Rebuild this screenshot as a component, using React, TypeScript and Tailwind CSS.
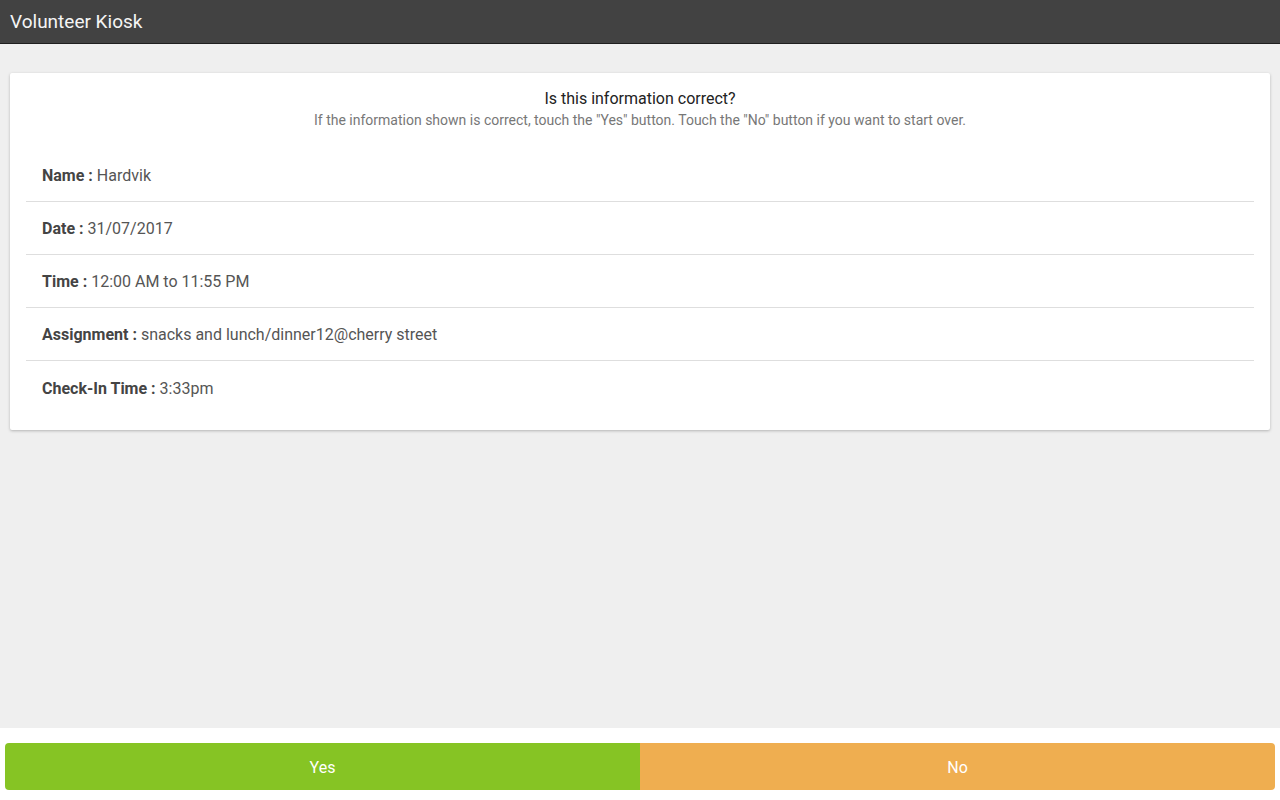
import React from "react";

const rows = [
  { label: "Name", value: "Hardvik" },
  { label: "Date", value: "31/07/2017" },
  { label: "Time", value: "12:00 AM to 11:55 PM" },
  { label: "Assignment", value: "snacks and lunch/dinner12@cherry street" },
  { label: "Check-In Time", value: "3:33pm" },
];

export default function App() {
  return (
    <div className="flex h-screen flex-col bg-[#efefef] font-['Roboto',sans-serif]">
      <header className="flex h-[44px] shrink-0 items-center border-b border-[#1f1f1f] bg-[#424242] px-[10px] pt-[1px]">
        <h1 className="text-[19px] text-[#f5f5f5]">Volunteer Kiosk</h1>
      </header>

      <main className="flex-1 px-[10px] pt-[29px]">
        <div className="rounded-[2px] bg-white px-4 pb-4 pt-[16px] shadow-[0_1px_3px_rgba(0,0,0,0.25)]">
          <div className="text-center">
            <h2 className="text-[16px] leading-[20px] text-[#222]">Is this information correct?</h2>
            <p className="mt-[2px] text-[14px] leading-[18px] text-[#777]">
              If the information shown is correct, touch the "Yes" button. Touch the "No" button if you want to start
              over.
            </p>
          </div>
          <ul className="mt-[20px]">
            {rows.map((r, i) => (
              <li
                key={r.label}
                className={
                  "flex h-[53px] items-center px-4 pt-[2px] text-[16px] text-[#555] " +
                  (i < rows.length - 1 ? "border-b border-[#dedede]" : "")
                }
              >
                <span className="mr-1 font-bold text-[#444]">{r.label} :</span>
                {r.value}
              </li>
            ))}
          </ul>
        </div>
      </main>

      <footer className="flex h-[72px] shrink-0 items-start bg-white px-[5px] pt-[15px]">
        <div className="flex h-[47px] w-full overflow-hidden rounded-[4px] text-[16px] text-white">
          <button className="flex-1 bg-[#86c424] pt-[2px]">Yes</button>
          <button className="flex-1 bg-[#efae50] pt-[2px]">No</button>
        </div>
      </footer>
    </div>
  );
}
